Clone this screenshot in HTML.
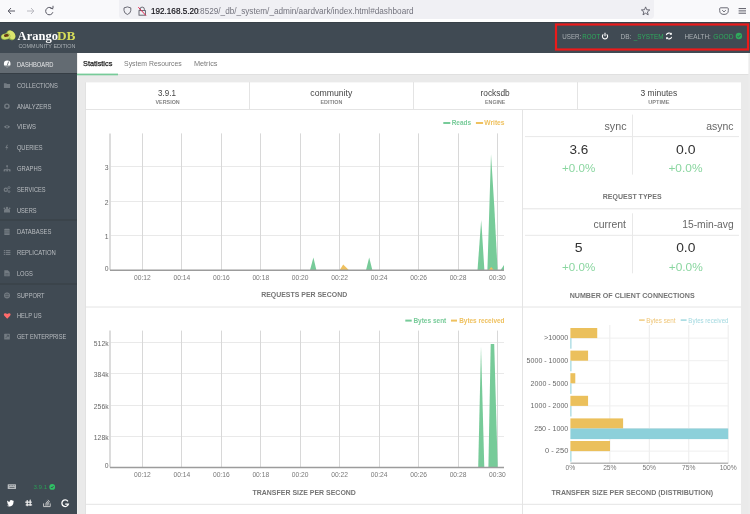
<!DOCTYPE html>
<html><head><meta charset="utf-8">
<style>
*{margin:0;padding:0}
html,body{width:750px;height:514px;overflow:hidden;background:#eaeaea;font-family:"Liberation Sans",sans-serif}
svg{position:absolute;left:0;top:0;will-change:transform}
</style></head><body>
<svg width="750" height="514" viewBox="0 0 750 514">
<rect x="0.00" y="0.00" width="750.00" height="22.00" fill="#f9f9fb" />
<rect x="119.00" y="-5.00" width="535.00" height="24.00" fill="#f0f0f4" rx="4"/>
<rect x="0.00" y="19.00" width="750.00" height="3.00" fill="#ffffff" />
<path d="M15 11 H8.2 M11 8 L8.2 11 L11 14" fill="none" stroke="#5b5b66" stroke-width="1" />
<path d="M27 11 H33.8 M31 8 L33.8 11 L31 14" fill="none" stroke="#b9b9c0" stroke-width="1" />
<path d="M52.6 9.3 A3.7 3.7 0 1 0 52.9 12.2" fill="none" stroke="#5b5b66" stroke-width="1" />
<path d="M50.4 8.4 L53 8.4 L53 5.8" fill="none" stroke="#5b5b66" stroke-width="1" />
<path d="M124 7.9 L127.4 6.9 L130.8 7.9 L130.8 10.4 Q130.8 13.2 127.4 14.5 Q124 13.2 124 10.4 Z" fill="none" stroke="#5b5b66" stroke-width="0.9" />
<path d="M140 10.6 V9.3 A2.2 2.2 0 0 1 144.4 9.3 V10.6" fill="none" stroke="#5b5b66" stroke-width="0.9" />
<rect x="139.00" y="10.60" width="6.40" height="4.60" fill="none" stroke="#5b5b66" stroke-width="0.9"/>
<line x1="138.30" y1="7.20" x2="146.00" y2="15.60" stroke="#e22850" stroke-width="1" />
<text x="151.00" y="14.00" font-size="8.2" fill="#15141a" font-weight="normal" font-family='"Liberation Sans",sans-serif' textLength="47.50" lengthAdjust="spacingAndGlyphs" stroke="#15141a" stroke-width="0.2">192.168.5.20</text>
<text x="197.80" y="14.00" font-size="8.2" fill="#73737d" font-weight="normal" font-family='"Liberation Sans",sans-serif' textLength="215.70" lengthAdjust="spacingAndGlyphs" >:8529/_db/_system/_admin/aardvark/index.html#dashboard</text>
<path d="M645.60 6.90 L646.72 9.76 L649.78 9.94 L647.41 11.89 L648.19 14.86 L645.60 13.20 L643.01 14.86 L643.79 11.89 L641.42 9.94 L644.48 9.76 Z" fill="none" stroke="#5b5b66" stroke-width="0.9" stroke-linejoin="round"/>
<path d="M720.6 7.8 H727.4 Q728.3 7.8 728.3 8.7 V10.6 Q728.3 14.4 724 14.4 Q719.7 14.4 719.7 10.6 V8.7 Q719.7 7.8 720.6 7.8 Z" fill="none" stroke="#5b5b66" stroke-width="0.9" />
<path d="M722.2 10.2 L724 11.9 L725.8 10.2" fill="none" stroke="#5b5b66" stroke-width="0.9" />
<line x1="738.60" y1="8.60" x2="746.00" y2="8.60" stroke="#5b5b66" stroke-width="1" />
<line x1="738.60" y1="10.90" x2="746.00" y2="10.90" stroke="#5b5b66" stroke-width="1" />
<line x1="738.60" y1="13.20" x2="746.00" y2="13.20" stroke="#5b5b66" stroke-width="1" />
<rect x="0.00" y="22.00" width="750.00" height="31.00" fill="#404a53" />
<line x1="0.00" y1="22.50" x2="750.00" y2="22.50" stroke="#384148" stroke-width="1" />
<ellipse cx="10.8" cy="35.2" rx="5.4" ry="4.0" transform="rotate(52 10.8 35.2)" fill="#93b04a"/>
<ellipse cx="11.4" cy="34.9" rx="4.8" ry="3.4" transform="rotate(52 11.4 34.9)" fill="#dbe46d"/>
<ellipse cx="5.6" cy="36.7" rx="4.8" ry="3.2" transform="rotate(-10 5.6 36.7)" fill="#86a743"/>
<ellipse cx="5.7" cy="36.4" rx="4.3" ry="2.7" transform="rotate(-10 5.7 36.4)" fill="#d0e068"/>
<ellipse cx="6.4" cy="35.4" rx="2.5" ry="1.45" transform="rotate(-6 6.4 35.4)" fill="#6b3a12"/>
<text x="17.60" y="40.00" font-size="13" fill="#ffffff" font-weight="bold" font-family='"Liberation Serif",serif' textLength="40.40" lengthAdjust="spacingAndGlyphs" >Arango</text>
<text x="57.00" y="40.00" font-size="13" fill="#d6dc5a" font-weight="bold" font-family='"Liberation Serif",serif' textLength="18.50" lengthAdjust="spacingAndGlyphs" >DB</text>
<text x="18.40" y="48.40" font-size="4.9" fill="#aab0b4" font-weight="normal" font-family='"Liberation Sans",sans-serif' textLength="57.10" lengthAdjust="spacingAndGlyphs" >COMMUNITY EDITION</text>
<rect x="556.00" y="24.50" width="192.00" height="25.00" fill="none" stroke="#ec1a1a" stroke-width="2.2"/>
<text x="562.30" y="38.60" font-size="6.6" fill="#aab0b4" font-weight="normal" font-family='"Liberation Sans",sans-serif' textLength="19.00" lengthAdjust="spacingAndGlyphs" >USER:</text>
<text x="582.30" y="38.60" font-size="6.6" fill="#2eab5c" font-weight="normal" font-family='"Liberation Sans",sans-serif' textLength="17.90" lengthAdjust="spacingAndGlyphs" >ROOT</text>
<path d="M603.3 34.3 A2.6 2.6 0 1 0 606.7 34.3" fill="none" stroke="#ffffff" stroke-width="1.1" />
<line x1="605.00" y1="32.80" x2="605.00" y2="36.20" stroke="#ffffff" stroke-width="1.1" />
<text x="620.50" y="38.60" font-size="6.6" fill="#aab0b4" font-weight="normal" font-family='"Liberation Sans",sans-serif' textLength="10.90" lengthAdjust="spacingAndGlyphs" >DB:</text>
<text x="633.70" y="38.60" font-size="6.6" fill="#2eab5c" font-weight="normal" font-family='"Liberation Sans",sans-serif' textLength="29.80" lengthAdjust="spacingAndGlyphs" >_SYSTEM</text>
<path d="M666.3 35.2 A2.8 2.8 0 0 1 671.3 34.2" fill="none" stroke="#ffffff" stroke-width="1.1" />
<path d="M671.6 36.8 A2.8 2.8 0 0 1 666.6 37.8" fill="none" stroke="#ffffff" stroke-width="1.1" />
<path d="M671.8 32.5 V34.8 H669.5 Z" fill="#ffffff" stroke="none" stroke-width="1" />
<path d="M666.1 39.5 V37.2 H668.4 Z" fill="#ffffff" stroke="none" stroke-width="1" />
<text x="684.50" y="38.60" font-size="6.6" fill="#aab0b4" font-weight="normal" font-family='"Liberation Sans",sans-serif' textLength="26.30" lengthAdjust="spacingAndGlyphs" >HEALTH:</text>
<text x="713.30" y="38.60" font-size="6.6" fill="#2eab5c" font-weight="normal" font-family='"Liberation Sans",sans-serif' textLength="20.20" lengthAdjust="spacingAndGlyphs" >GOOD</text>
<circle cx="738.9" cy="36" r="3.2" fill="#2eab5c"/>
<path d="M737.3 36.1 L738.5 37.2 L740.6 34.9" fill="none" stroke="#404a53" stroke-width="1" />
<rect x="0.00" y="53.00" width="77.00" height="461.00" fill="#404a53" />
<rect x="0.00" y="53.00" width="77.00" height="20.40" fill="#636b72" />
<text x="16.90" y="66.50" font-size="6.8" fill="#e6e7e8" font-weight="normal" font-family='"Liberation Sans",sans-serif' textLength="36.60" lengthAdjust="spacingAndGlyphs" >DASHBOARD</text>
<text x="16.90" y="88.00" font-size="6.8" fill="#b9bdc1" font-weight="normal" font-family='"Liberation Sans",sans-serif' textLength="40.90" lengthAdjust="spacingAndGlyphs" >COLLECTIONS</text>
<text x="16.90" y="108.80" font-size="6.8" fill="#b9bdc1" font-weight="normal" font-family='"Liberation Sans",sans-serif' textLength="34.60" lengthAdjust="spacingAndGlyphs" >ANALYZERS</text>
<text x="16.90" y="129.30" font-size="6.8" fill="#b9bdc1" font-weight="normal" font-family='"Liberation Sans",sans-serif' textLength="19.10" lengthAdjust="spacingAndGlyphs" >VIEWS</text>
<text x="16.90" y="150.10" font-size="6.8" fill="#b9bdc1" font-weight="normal" font-family='"Liberation Sans",sans-serif' textLength="25.60" lengthAdjust="spacingAndGlyphs" >QUERIES</text>
<text x="16.90" y="170.90" font-size="6.8" fill="#b9bdc1" font-weight="normal" font-family='"Liberation Sans",sans-serif' textLength="24.80" lengthAdjust="spacingAndGlyphs" >GRAPHS</text>
<text x="16.90" y="191.60" font-size="6.8" fill="#b9bdc1" font-weight="normal" font-family='"Liberation Sans",sans-serif' textLength="28.70" lengthAdjust="spacingAndGlyphs" >SERVICES</text>
<text x="16.90" y="212.60" font-size="6.8" fill="#b9bdc1" font-weight="normal" font-family='"Liberation Sans",sans-serif' textLength="19.70" lengthAdjust="spacingAndGlyphs" >USERS</text>
<text x="16.90" y="234.40" font-size="6.8" fill="#b9bdc1" font-weight="normal" font-family='"Liberation Sans",sans-serif' textLength="34.60" lengthAdjust="spacingAndGlyphs" >DATABASES</text>
<text x="16.90" y="255.10" font-size="6.8" fill="#b9bdc1" font-weight="normal" font-family='"Liberation Sans",sans-serif' textLength="38.90" lengthAdjust="spacingAndGlyphs" >REPLICATION</text>
<text x="16.90" y="275.80" font-size="6.8" fill="#b9bdc1" font-weight="normal" font-family='"Liberation Sans",sans-serif' textLength="16.00" lengthAdjust="spacingAndGlyphs" >LOGS</text>
<text x="16.90" y="297.90" font-size="6.8" fill="#b9bdc1" font-weight="normal" font-family='"Liberation Sans",sans-serif' textLength="27.50" lengthAdjust="spacingAndGlyphs" >SUPPORT</text>
<text x="16.90" y="318.40" font-size="6.8" fill="#b9bdc1" font-weight="normal" font-family='"Liberation Sans",sans-serif' textLength="24.80" lengthAdjust="spacingAndGlyphs" >HELP US</text>
<text x="16.90" y="339.10" font-size="6.8" fill="#b9bdc1" font-weight="normal" font-family='"Liberation Sans",sans-serif' textLength="49.30" lengthAdjust="spacingAndGlyphs" >GET ENTERPRISE</text>
<line x1="0.00" y1="73.50" x2="77.00" y2="73.50" stroke="#363e45" stroke-width="1" />
<line x1="0.00" y1="220.00" x2="77.00" y2="220.00" stroke="#363e45" stroke-width="1" />
<line x1="0.00" y1="284.00" x2="77.00" y2="284.00" stroke="#363e45" stroke-width="1" />
<rect x="77.00" y="53.00" width="1.00" height="461.00" fill="#f0f0ef" />
<circle cx="7.2" cy="63.9" r="3.3" fill="#ffffff"/>
<rect x="3.60" y="65.60" width="7.20" height="1.20" fill="#636b72" />
<path d="M7.2 65.6 L8.6 61.6" fill="none" stroke="#636b72" stroke-width="0.9" />
<path d="M3.9 83.2 H6.3 L7 84 H10.1 V88 H3.9 Z" fill="#737b82" stroke="none" stroke-width="1" />
<circle cx="6.9" cy="106.2" r="2.1" fill="none" stroke="#737b82" stroke-width="1.4"/>
<path d="M3.8 126.8 Q7 123.6 10.2 126.8 Q7 130 3.8 126.8 Z" fill="#737b82" stroke="none" stroke-width="1" />
<circle cx="7" cy="126.8" r="0.9" fill="#404a53"/>
<path d="M6.9 144.8 L5.3 148 H6.7 L5.9 150.6 L8.3 147 H6.9 L7.9 144.8 Z" fill="#737b82" stroke="none" stroke-width="1" />
<rect x="6.20" y="165.30" width="1.80" height="1.60" fill="#737b82" />
<rect x="4.00" y="169.20" width="6.20" height="0.80" fill="#737b82" />
<rect x="3.60" y="169.60" width="1.80" height="1.80" fill="#737b82" />
<rect x="6.20" y="169.60" width="1.80" height="1.80" fill="#737b82" />
<rect x="8.80" y="169.60" width="1.80" height="1.80" fill="#737b82" />
<rect x="6.80" y="166.50" width="0.60" height="3.00" fill="#737b82" />
<circle cx="5.8" cy="189.8" r="1.6" fill="none" stroke="#737b82" stroke-width="1.2"/>
<circle cx="9" cy="187.6" r="1" fill="none" stroke="#737b82" stroke-width="0.9"/>
<circle cx="9" cy="191.6" r="0.9" fill="none" stroke="#737b82" stroke-width="0.9"/>
<path d="M4 212.6 V210.4 Q4 209 5.5 209 H8.6 Q10 209 10 210.4 V212.6 Z" fill="#737b82" stroke="none" stroke-width="1" />
<circle cx="7" cy="208" r="1.2" fill="#737b82"/>
<circle cx="4.4" cy="208.3" r="0.9" fill="#737b82"/>
<circle cx="9.6" cy="208.3" r="0.9" fill="#737b82"/>
<rect x="4.30" y="228.80" width="5.30" height="6.20" fill="#737b82" rx="0.6"/>
<line x1="4.30" y1="230.90" x2="9.60" y2="230.90" stroke="#404a53" stroke-width="0.5" />
<line x1="4.30" y1="232.90" x2="9.60" y2="232.90" stroke="#404a53" stroke-width="0.5" />
<rect x="3.80" y="250.00" width="1.40" height="1.20" fill="#737b82" />
<rect x="5.80" y="250.00" width="4.60" height="1.20" fill="#737b82" />
<rect x="3.80" y="251.90" width="1.40" height="1.20" fill="#737b82" />
<rect x="5.80" y="251.90" width="4.60" height="1.20" fill="#737b82" />
<rect x="3.80" y="253.80" width="1.40" height="1.20" fill="#737b82" />
<rect x="5.80" y="253.80" width="4.60" height="1.20" fill="#737b82" />
<path d="M4.3 270.2 H7.8 L9.7 272.1 V276.3 H4.3 Z" fill="#737b82" stroke="none" stroke-width="1" />
<line x1="5.40" y1="273.60" x2="8.60" y2="273.60" stroke="#404a53" stroke-width="0.5" />
<line x1="5.40" y1="275.00" x2="8.60" y2="275.00" stroke="#404a53" stroke-width="0.5" />
<circle cx="7" cy="295.4" r="2.4" fill="none" stroke="#737b82" stroke-width="1.2"/>
<line x1="4.20" y1="295.40" x2="9.80" y2="295.40" stroke="#737b82" stroke-width="0.8" />
<line x1="7.00" y1="292.60" x2="7.00" y2="298.20" stroke="#737b82" stroke-width="0.8" />
<path d="M7.2 318.8 L4.3 315.8 Q3.3 314.6 4.2 313.6 Q5.5 312.5 7.2 314 Q8.9 312.5 10.2 313.6 Q11.1 314.6 10.1 315.8 Z" fill="#ff6b6b" stroke="none" stroke-width="1" />
<rect x="4.20" y="333.80" width="5.60" height="5.60" fill="#737b82" rx="0.5"/>
<path d="M5.8 337.8 L8.4 335.2 M6.8 335.2 H8.4 V336.8" fill="none" stroke="#404a53" stroke-width="0.7" />
<rect x="7.70" y="484.20" width="8.30" height="4.80" fill="#b7bbbe" rx="0.5"/>
<rect x="9.00" y="485.30" width="0.90" height="0.80" fill="#5a6268" />
<rect x="10.60" y="485.30" width="0.90" height="0.80" fill="#5a6268" />
<rect x="12.20" y="485.30" width="0.90" height="0.80" fill="#5a6268" />
<rect x="13.80" y="485.30" width="0.90" height="0.80" fill="#5a6268" />
<rect x="9.50" y="487.20" width="5.00" height="0.80" fill="#5a6268" />
<text x="33.40" y="489.30" font-size="6.2" fill="#2a9f56" font-weight="normal" font-family='"Liberation Sans",sans-serif' textLength="13.70" lengthAdjust="spacingAndGlyphs" >3.9.1</text>
<circle cx="52.2" cy="486.9" r="2.9" fill="#2fc064"/>
<path d="M50.9 487 L51.9 488 L53.6 486" fill="none" stroke="#404a53" stroke-width="0.9" />
<path d="M13.8 500.8 Q13.2 501.1 12.7 501.1 Q13.2 500.7 13.4 500.2 Q12.9 500.5 12.4 500.6 Q11.4 499.7 10.3 500.3 Q9.4 500.9 9.6 501.9 Q8.2 501.9 7.2 500.6 Q6.7 501.8 7.8 502.6 Q7.4 502.6 7.1 502.4 Q7.2 503.6 8.3 503.9 Q7.9 504 7.6 503.9 Q8 505 9.2 505 Q8.1 505.9 6.7 505.7 Q9.5 507.4 12.2 505.5 Q13.6 504 13.6 501.6 Z" fill="#ffffff" stroke="none" stroke-width="1" />
<rect x="26.60" y="500.00" width="1.20" height="6.20" fill="#f0f0f0" rx="0.5"/>
<rect x="29.60" y="499.60" width="1.20" height="6.20" fill="#f0f0f0" rx="0.5"/>
<rect x="25.20" y="501.60" width="6.60" height="1.20" fill="#f0f0f0" rx="0.5"/>
<rect x="25.60" y="504.20" width="6.60" height="1.20" fill="#f0f0f0" rx="0.5"/>
<path d="M43.6 503.4 V506.6 H50.2 V503.4" fill="none" stroke="#d8d8d8" stroke-width="0.9" />
<rect x="45.00" y="504.60" width="3.60" height="0.80" fill="#d8d8d8" />
<path d="M45.4 503.6 L48.6 504.1 M45.9 502.2 L48.8 503.4 M46.8 500.9 L49.2 502.8 M48 499.8 L49.8 502.2" fill="none" stroke="#d8d8d8" stroke-width="0.8" />
<path d="M67.9 501.3 A3.3 3.3 0 1 0 68.4 504.1 H65.2" fill="none" stroke="#ffffff" stroke-width="1.3" />
<rect x="78.00" y="53.00" width="672.00" height="21.00" fill="#ffffff" />
<line x1="78.00" y1="74.50" x2="750.00" y2="74.50" stroke="#e0e0e0" stroke-width="1" />
<rect x="77.00" y="73.60" width="41.00" height="1.70" fill="#77cb99" />
<text x="83.00" y="65.90" font-size="7.3" fill="#222222" font-weight="normal" font-family='"Liberation Sans",sans-serif' textLength="29.30" lengthAdjust="spacingAndGlyphs" stroke="#222222" stroke-width="0.25">Statistics</text>
<text x="124.10" y="65.90" font-size="7.3" fill="#7a7a7a" font-weight="normal" font-family='"Liberation Sans",sans-serif' textLength="57.70" lengthAdjust="spacingAndGlyphs" >System Resources</text>
<text x="193.90" y="65.90" font-size="7.3" fill="#7a7a7a" font-weight="normal" font-family='"Liberation Sans",sans-serif' textLength="23.60" lengthAdjust="spacingAndGlyphs" >Metrics</text>
<rect x="748.40" y="53.00" width="1.60" height="461.00" fill="#ececec" />
<rect x="86.00" y="82.40" width="655.00" height="432.00" fill="#ffffff" />
<line x1="85.50" y1="82.40" x2="85.50" y2="514.00" stroke="#e2e2e2" stroke-width="1" />
<line x1="86.00" y1="109.50" x2="741.00" y2="109.50" stroke="#e4e4e4" stroke-width="1" />
<line x1="249.50" y1="82.00" x2="249.50" y2="109.00" stroke="#e4e4e4" stroke-width="1" />
<line x1="413.50" y1="82.00" x2="413.50" y2="109.00" stroke="#e4e4e4" stroke-width="1" />
<line x1="577.50" y1="82.00" x2="577.50" y2="109.00" stroke="#e4e4e4" stroke-width="1" />
<text x="158.10" y="96.00" font-size="8.8" fill="#444444" font-weight="normal" font-family='"Liberation Sans",sans-serif' textLength="17.80" lengthAdjust="spacingAndGlyphs" >3.9.1</text>
<text x="155.50" y="104.10" font-size="5.9" fill="#858585" font-weight="bold" font-family='"Liberation Sans",sans-serif' textLength="24.20" lengthAdjust="spacingAndGlyphs" >VERSION</text>
<text x="310.30" y="96.00" font-size="8.8" fill="#444444" font-weight="normal" font-family='"Liberation Sans",sans-serif' textLength="42.00" lengthAdjust="spacingAndGlyphs" >community</text>
<text x="320.50" y="104.10" font-size="5.9" fill="#858585" font-weight="bold" font-family='"Liberation Sans",sans-serif' textLength="21.80" lengthAdjust="spacingAndGlyphs" >EDITION</text>
<text x="480.50" y="96.00" font-size="8.8" fill="#444444" font-weight="normal" font-family='"Liberation Sans",sans-serif' textLength="29.20" lengthAdjust="spacingAndGlyphs" >rocksdb</text>
<text x="485.10" y="104.10" font-size="5.9" fill="#858585" font-weight="bold" font-family='"Liberation Sans",sans-serif' textLength="20.20" lengthAdjust="spacingAndGlyphs" >ENGINE</text>
<text x="640.50" y="96.00" font-size="8.8" fill="#444444" font-weight="normal" font-family='"Liberation Sans",sans-serif' textLength="36.80" lengthAdjust="spacingAndGlyphs" >3 minutes</text>
<text x="648.30" y="104.10" font-size="5.9" fill="#858585" font-weight="bold" font-family='"Liberation Sans",sans-serif' textLength="21.20" lengthAdjust="spacingAndGlyphs" >UPTIME</text>
<line x1="522.50" y1="109.00" x2="522.50" y2="514.00" stroke="#e4e4e4" stroke-width="1" />
<line x1="522.00" y1="208.80" x2="741.00" y2="208.80" stroke="#e4e4e4" stroke-width="1" />
<line x1="86.00" y1="307.00" x2="741.00" y2="307.00" stroke="#e4e4e4" stroke-width="1" />
<line x1="86.00" y1="504.30" x2="741.00" y2="504.30" stroke="#e4e4e4" stroke-width="1" />
<line x1="525.00" y1="136.60" x2="739.00" y2="136.60" stroke="#e8e8e8" stroke-width="1" />
<line x1="632.50" y1="114.60" x2="632.50" y2="174.60" stroke="#e8e8e8" stroke-width="1" />
<text x="604.50" y="130.00" font-size="10.5" fill="#666666" font-weight="normal" font-family='"Liberation Sans",sans-serif' textLength="22.00" lengthAdjust="spacingAndGlyphs" >sync</text>
<text x="706.20" y="130.00" font-size="10.5" fill="#666666" font-weight="normal" font-family='"Liberation Sans",sans-serif' textLength="27.30" lengthAdjust="spacingAndGlyphs" >async</text>
<text x="569.50" y="153.50" font-size="12.8" fill="#333333" font-weight="normal" font-family='"Liberation Sans",sans-serif' textLength="18.80" lengthAdjust="spacingAndGlyphs" >3.6</text>
<text x="676.00" y="153.50" font-size="12.8" fill="#333333" font-weight="normal" font-family='"Liberation Sans",sans-serif' textLength="19.50" lengthAdjust="spacingAndGlyphs" >0.0</text>
<text x="562.10" y="172.20" font-size="11.3" fill="#8ad6a0" font-weight="normal" font-family='"Liberation Sans",sans-serif' textLength="33.20" lengthAdjust="spacingAndGlyphs" >+0.0%</text>
<text x="668.40" y="172.20" font-size="11.3" fill="#8ad6a0" font-weight="normal" font-family='"Liberation Sans",sans-serif' textLength="34.10" lengthAdjust="spacingAndGlyphs" >+0.0%</text>
<text x="602.80" y="198.70" font-size="7.2" fill="#747474" font-weight="bold" font-family='"Liberation Sans",sans-serif' textLength="58.80" lengthAdjust="spacingAndGlyphs" >REQUEST TYPES</text>
<line x1="525.00" y1="235.30" x2="739.00" y2="235.30" stroke="#e8e8e8" stroke-width="1" />
<line x1="632.50" y1="213.30" x2="632.50" y2="273.30" stroke="#e8e8e8" stroke-width="1" />
<text x="593.50" y="228.20" font-size="10.5" fill="#666666" font-weight="normal" font-family='"Liberation Sans",sans-serif' textLength="32.50" lengthAdjust="spacingAndGlyphs" >current</text>
<text x="682.20" y="228.20" font-size="10.5" fill="#666666" font-weight="normal" font-family='"Liberation Sans",sans-serif' textLength="51.50" lengthAdjust="spacingAndGlyphs" >15-min-avg</text>
<text x="574.70" y="251.70" font-size="12.8" fill="#333333" font-weight="normal" font-family='"Liberation Sans",sans-serif' textLength="7.80" lengthAdjust="spacingAndGlyphs" >5</text>
<text x="676.20" y="251.70" font-size="12.8" fill="#333333" font-weight="normal" font-family='"Liberation Sans",sans-serif' textLength="19.20" lengthAdjust="spacingAndGlyphs" >0.0</text>
<text x="562.10" y="270.90" font-size="11.3" fill="#8ad6a0" font-weight="normal" font-family='"Liberation Sans",sans-serif' textLength="33.20" lengthAdjust="spacingAndGlyphs" >+0.0%</text>
<text x="668.70" y="270.90" font-size="11.3" fill="#8ad6a0" font-weight="normal" font-family='"Liberation Sans",sans-serif' textLength="34.10" lengthAdjust="spacingAndGlyphs" >+0.0%</text>
<text x="569.70" y="297.60" font-size="7.2" fill="#747474" font-weight="bold" font-family='"Liberation Sans",sans-serif' textLength="125.00" lengthAdjust="spacingAndGlyphs" >NUMBER OF CLIENT CONNECTIONS</text>
<line x1="110.00" y1="166.50" x2="504.00" y2="166.50" stroke="#e9e9e9" stroke-width="1" />
<line x1="110.00" y1="201.50" x2="504.00" y2="201.50" stroke="#e9e9e9" stroke-width="1" />
<line x1="110.00" y1="235.50" x2="504.00" y2="235.50" stroke="#e9e9e9" stroke-width="1" />
<line x1="142.50" y1="133.40" x2="142.50" y2="270.30" stroke="#d8d8d8" stroke-width="1" />
<line x1="181.50" y1="133.40" x2="181.50" y2="270.30" stroke="#d8d8d8" stroke-width="1" />
<line x1="221.50" y1="133.40" x2="221.50" y2="270.30" stroke="#d8d8d8" stroke-width="1" />
<line x1="260.50" y1="133.40" x2="260.50" y2="270.30" stroke="#d8d8d8" stroke-width="1" />
<line x1="300.50" y1="133.40" x2="300.50" y2="270.30" stroke="#d8d8d8" stroke-width="1" />
<line x1="339.50" y1="133.40" x2="339.50" y2="270.30" stroke="#d8d8d8" stroke-width="1" />
<line x1="379.50" y1="133.40" x2="379.50" y2="270.30" stroke="#d8d8d8" stroke-width="1" />
<line x1="418.50" y1="133.40" x2="418.50" y2="270.30" stroke="#d8d8d8" stroke-width="1" />
<line x1="458.50" y1="133.40" x2="458.50" y2="270.30" stroke="#d8d8d8" stroke-width="1" />
<line x1="497.50" y1="133.40" x2="497.50" y2="270.30" stroke="#d8d8d8" stroke-width="1" />
<line x1="110.00" y1="133.40" x2="110.00" y2="270.30" stroke="#d9d9d9" stroke-width="1.8" />
<text x="108.60" y="170.10" font-size="6.8" fill="#666666" text-anchor="end" font-weight="normal" font-family='"Liberation Sans",sans-serif' >3</text>
<text x="108.60" y="205.10" font-size="6.8" fill="#666666" text-anchor="end" font-weight="normal" font-family='"Liberation Sans",sans-serif' >2</text>
<text x="108.60" y="239.10" font-size="6.8" fill="#666666" text-anchor="end" font-weight="normal" font-family='"Liberation Sans",sans-serif' >1</text>
<text x="108.60" y="270.60" font-size="6.8" fill="#666666" text-anchor="end" font-weight="normal" font-family='"Liberation Sans",sans-serif' >0</text>
<text x="142.40" y="279.70" font-size="6.7" fill="#777777" text-anchor="middle" font-weight="normal" font-family='"Liberation Sans",sans-serif' >00:12</text>
<text x="181.85" y="279.70" font-size="6.7" fill="#777777" text-anchor="middle" font-weight="normal" font-family='"Liberation Sans",sans-serif' >00:14</text>
<text x="221.30" y="279.70" font-size="6.7" fill="#777777" text-anchor="middle" font-weight="normal" font-family='"Liberation Sans",sans-serif' >00:16</text>
<text x="260.75" y="279.70" font-size="6.7" fill="#777777" text-anchor="middle" font-weight="normal" font-family='"Liberation Sans",sans-serif' >00:18</text>
<text x="300.20" y="279.70" font-size="6.7" fill="#777777" text-anchor="middle" font-weight="normal" font-family='"Liberation Sans",sans-serif' >00:20</text>
<text x="339.65" y="279.70" font-size="6.7" fill="#777777" text-anchor="middle" font-weight="normal" font-family='"Liberation Sans",sans-serif' >00:22</text>
<text x="379.10" y="279.70" font-size="6.7" fill="#777777" text-anchor="middle" font-weight="normal" font-family='"Liberation Sans",sans-serif' >00:24</text>
<text x="418.55" y="279.70" font-size="6.7" fill="#777777" text-anchor="middle" font-weight="normal" font-family='"Liberation Sans",sans-serif' >00:26</text>
<text x="458.00" y="279.70" font-size="6.7" fill="#777777" text-anchor="middle" font-weight="normal" font-family='"Liberation Sans",sans-serif' >00:28</text>
<text x="497.45" y="279.70" font-size="6.7" fill="#777777" text-anchor="middle" font-weight="normal" font-family='"Liberation Sans",sans-serif' >00:30</text>
<text x="261.20" y="297.40" font-size="7.2" fill="#747474" font-weight="bold" font-family='"Liberation Sans",sans-serif' textLength="86.00" lengthAdjust="spacingAndGlyphs" >REQUESTS PER SECOND</text>
<path d="M310.00 270.30 L313.40 257.40 L316.40 270.30 Z" fill="#77cb99" stroke="none" stroke-width="1" />
<path d="M366.00 270.30 L369.20 257.40 L372.40 270.30 Z" fill="#77cb99" stroke="none" stroke-width="1" />
<path d="M339.60 270.30 L343.20 264.40 L349.00 270.30 Z" fill="#efc15f" stroke="none" stroke-width="1" />
<path d="M477.50 270.30 L481.20 219.80 L484.40 270.30 Z" fill="#77cb99" stroke="none" stroke-width="1" />
<path d="M487.40 270.30 L491.00 154.10 L494.20 205.00 L497.60 270.30 Z" fill="#77cb99" stroke="none" stroke-width="1" />
<path d="M488.50 270.30 L491.20 267.00 L494.00 270.30 Z" fill="#efc15f" stroke="none" stroke-width="1" />
<path d="M500.50 270.30 L504.00 265.00 L504.00 270.30 Z" fill="#77cb99" stroke="none" stroke-width="1" />
<line x1="110.00" y1="270.30" x2="504.00" y2="270.30" stroke="#9c9c9c" stroke-width="1.5" />
<line x1="443.30" y1="123.00" x2="450.30" y2="123.00" stroke="#77cb99" stroke-width="2" />
<text x="451.70" y="125.40" font-size="6.3" fill="#77cb99" font-weight="bold" font-family='"Liberation Sans",sans-serif' textLength="19.40" lengthAdjust="spacingAndGlyphs" >Reads</text>
<line x1="475.90" y1="123.00" x2="483.10" y2="123.00" stroke="#efc15f" stroke-width="2" />
<text x="484.30" y="125.40" font-size="6.3" fill="#efc15f" font-weight="bold" font-family='"Liberation Sans",sans-serif' textLength="20.20" lengthAdjust="spacingAndGlyphs" >Writes</text>
<line x1="110.00" y1="342.50" x2="504.00" y2="342.50" stroke="#e9e9e9" stroke-width="1" />
<line x1="110.00" y1="373.50" x2="504.00" y2="373.50" stroke="#e9e9e9" stroke-width="1" />
<line x1="110.00" y1="405.50" x2="504.00" y2="405.50" stroke="#e9e9e9" stroke-width="1" />
<line x1="110.00" y1="436.50" x2="504.00" y2="436.50" stroke="#e9e9e9" stroke-width="1" />
<line x1="142.50" y1="330.60" x2="142.50" y2="467.60" stroke="#d8d8d8" stroke-width="1" />
<line x1="181.50" y1="330.60" x2="181.50" y2="467.60" stroke="#d8d8d8" stroke-width="1" />
<line x1="221.50" y1="330.60" x2="221.50" y2="467.60" stroke="#d8d8d8" stroke-width="1" />
<line x1="260.50" y1="330.60" x2="260.50" y2="467.60" stroke="#d8d8d8" stroke-width="1" />
<line x1="300.50" y1="330.60" x2="300.50" y2="467.60" stroke="#d8d8d8" stroke-width="1" />
<line x1="339.50" y1="330.60" x2="339.50" y2="467.60" stroke="#d8d8d8" stroke-width="1" />
<line x1="379.50" y1="330.60" x2="379.50" y2="467.60" stroke="#d8d8d8" stroke-width="1" />
<line x1="418.50" y1="330.60" x2="418.50" y2="467.60" stroke="#d8d8d8" stroke-width="1" />
<line x1="458.50" y1="330.60" x2="458.50" y2="467.60" stroke="#d8d8d8" stroke-width="1" />
<line x1="497.50" y1="330.60" x2="497.50" y2="467.60" stroke="#d8d8d8" stroke-width="1" />
<line x1="110.00" y1="330.60" x2="110.00" y2="467.60" stroke="#d9d9d9" stroke-width="1.8" />
<text x="108.60" y="346.10" font-size="6.8" fill="#666666" text-anchor="end" font-weight="normal" font-family='"Liberation Sans",sans-serif' >512k</text>
<text x="108.60" y="377.10" font-size="6.8" fill="#666666" text-anchor="end" font-weight="normal" font-family='"Liberation Sans",sans-serif' >384k</text>
<text x="108.60" y="409.10" font-size="6.8" fill="#666666" text-anchor="end" font-weight="normal" font-family='"Liberation Sans",sans-serif' >256k</text>
<text x="108.60" y="440.10" font-size="6.8" fill="#666666" text-anchor="end" font-weight="normal" font-family='"Liberation Sans",sans-serif' >128k</text>
<text x="108.60" y="467.90" font-size="6.8" fill="#666666" text-anchor="end" font-weight="normal" font-family='"Liberation Sans",sans-serif' >0</text>
<text x="142.40" y="477.00" font-size="6.7" fill="#777777" text-anchor="middle" font-weight="normal" font-family='"Liberation Sans",sans-serif' >00:12</text>
<text x="181.85" y="477.00" font-size="6.7" fill="#777777" text-anchor="middle" font-weight="normal" font-family='"Liberation Sans",sans-serif' >00:14</text>
<text x="221.30" y="477.00" font-size="6.7" fill="#777777" text-anchor="middle" font-weight="normal" font-family='"Liberation Sans",sans-serif' >00:16</text>
<text x="260.75" y="477.00" font-size="6.7" fill="#777777" text-anchor="middle" font-weight="normal" font-family='"Liberation Sans",sans-serif' >00:18</text>
<text x="300.20" y="477.00" font-size="6.7" fill="#777777" text-anchor="middle" font-weight="normal" font-family='"Liberation Sans",sans-serif' >00:20</text>
<text x="339.65" y="477.00" font-size="6.7" fill="#777777" text-anchor="middle" font-weight="normal" font-family='"Liberation Sans",sans-serif' >00:22</text>
<text x="379.10" y="477.00" font-size="6.7" fill="#777777" text-anchor="middle" font-weight="normal" font-family='"Liberation Sans",sans-serif' >00:24</text>
<text x="418.55" y="477.00" font-size="6.7" fill="#777777" text-anchor="middle" font-weight="normal" font-family='"Liberation Sans",sans-serif' >00:26</text>
<text x="458.00" y="477.00" font-size="6.7" fill="#777777" text-anchor="middle" font-weight="normal" font-family='"Liberation Sans",sans-serif' >00:28</text>
<text x="497.45" y="477.00" font-size="6.7" fill="#777777" text-anchor="middle" font-weight="normal" font-family='"Liberation Sans",sans-serif' >00:30</text>
<text x="252.50" y="494.70" font-size="7.2" fill="#747474" font-weight="bold" font-family='"Liberation Sans",sans-serif' textLength="103.40" lengthAdjust="spacingAndGlyphs" >TRANSFER SIZE PER SECOND</text>
<path d="M478.20 467.60 L481.00 346.00 L484.30 467.60 Z" fill="#77cb99" stroke="none" stroke-width="1" />
<path d="M488.40 467.60 L490.70 344.00 L494.20 344.00 L497.70 467.60 Z" fill="#77cb99" stroke="none" stroke-width="1" />
<line x1="110.00" y1="467.60" x2="504.00" y2="467.60" stroke="#9c9c9c" stroke-width="1.5" />
<line x1="405.30" y1="320.60" x2="411.70" y2="320.60" stroke="#77cb99" stroke-width="2" />
<text x="413.40" y="322.90" font-size="6.3" fill="#77cb99" font-weight="bold" font-family='"Liberation Sans",sans-serif' textLength="32.90" lengthAdjust="spacingAndGlyphs" >Bytes sent</text>
<line x1="451.00" y1="320.60" x2="457.00" y2="320.60" stroke="#efc15f" stroke-width="2" />
<text x="459.20" y="322.90" font-size="6.3" fill="#efc15f" font-weight="bold" font-family='"Liberation Sans",sans-serif' textLength="45.30" lengthAdjust="spacingAndGlyphs" >Bytes received</text>
<line x1="609.85" y1="325.00" x2="609.85" y2="463.00" stroke="#ececec" stroke-width="1" />
<line x1="649.30" y1="325.00" x2="649.30" y2="463.00" stroke="#ececec" stroke-width="1" />
<line x1="688.75" y1="325.00" x2="688.75" y2="463.00" stroke="#ececec" stroke-width="1" />
<line x1="728.20" y1="325.00" x2="728.20" y2="463.00" stroke="#ececec" stroke-width="1" />
<line x1="570.40" y1="338.10" x2="728.20" y2="338.10" stroke="#efefef" stroke-width="1" />
<rect x="570.40" y="328.00" width="26.83" height="10.10" fill="#ebc05c" />
<rect x="570.40" y="338.10" width="1.00" height="10.60" fill="#8cd0da" />
<text x="544.10" y="340.40" font-size="6.8" fill="#6a6a6a" font-weight="normal" font-family='"Liberation Sans",sans-serif' textLength="24.20" lengthAdjust="spacingAndGlyphs" >&gt;10000</text>
<line x1="570.40" y1="360.70" x2="728.20" y2="360.70" stroke="#efefef" stroke-width="1" />
<rect x="570.40" y="350.60" width="17.67" height="10.10" fill="#ebc05c" />
<rect x="570.40" y="360.70" width="1.00" height="10.60" fill="#8cd0da" />
<text x="526.60" y="363.00" font-size="6.8" fill="#6a6a6a" font-weight="normal" font-family='"Liberation Sans",sans-serif' textLength="41.70" lengthAdjust="spacingAndGlyphs" >5000 - 10000</text>
<line x1="570.40" y1="383.30" x2="728.20" y2="383.30" stroke="#efefef" stroke-width="1" />
<rect x="570.40" y="373.20" width="4.89" height="10.10" fill="#ebc05c" />
<rect x="570.40" y="383.30" width="1.00" height="10.60" fill="#8cd0da" />
<text x="530.60" y="385.60" font-size="6.8" fill="#6a6a6a" font-weight="normal" font-family='"Liberation Sans",sans-serif' textLength="37.70" lengthAdjust="spacingAndGlyphs" >2000 - 5000</text>
<line x1="570.40" y1="405.90" x2="728.20" y2="405.90" stroke="#efefef" stroke-width="1" />
<rect x="570.40" y="395.80" width="17.67" height="10.10" fill="#ebc05c" />
<rect x="570.40" y="405.90" width="1.00" height="10.60" fill="#8cd0da" />
<text x="530.60" y="408.20" font-size="6.8" fill="#6a6a6a" font-weight="normal" font-family='"Liberation Sans",sans-serif' textLength="37.70" lengthAdjust="spacingAndGlyphs" >1000 - 2000</text>
<line x1="570.40" y1="428.50" x2="728.20" y2="428.50" stroke="#efefef" stroke-width="1" />
<rect x="570.40" y="418.40" width="52.71" height="10.10" fill="#ebc05c" />
<rect x="570.40" y="428.50" width="157.80" height="10.60" fill="#8cd0da" />
<text x="534.20" y="430.80" font-size="6.8" fill="#6a6a6a" font-weight="normal" font-family='"Liberation Sans",sans-serif' textLength="34.10" lengthAdjust="spacingAndGlyphs" >250 - 1000</text>
<line x1="570.40" y1="451.10" x2="728.20" y2="451.10" stroke="#efefef" stroke-width="1" />
<rect x="570.40" y="441.00" width="39.61" height="10.10" fill="#ebc05c" />
<rect x="570.40" y="451.10" width="1.00" height="10.60" fill="#8cd0da" />
<text x="545.00" y="453.40" font-size="6.8" fill="#6a6a6a" font-weight="normal" font-family='"Liberation Sans",sans-serif' textLength="23.30" lengthAdjust="spacingAndGlyphs" >0 - 250</text>
<line x1="570.40" y1="463.30" x2="728.20" y2="463.30" stroke="#b8b8b8" stroke-width="1.4" />
<text x="570.40" y="470.40" font-size="6.7" fill="#777777" text-anchor="middle" font-weight="normal" font-family='"Liberation Sans",sans-serif' >0%</text>
<text x="609.85" y="470.40" font-size="6.7" fill="#777777" text-anchor="middle" font-weight="normal" font-family='"Liberation Sans",sans-serif' >25%</text>
<text x="649.30" y="470.40" font-size="6.7" fill="#777777" text-anchor="middle" font-weight="normal" font-family='"Liberation Sans",sans-serif' >50%</text>
<text x="688.75" y="470.40" font-size="6.7" fill="#777777" text-anchor="middle" font-weight="normal" font-family='"Liberation Sans",sans-serif' >75%</text>
<text x="728.20" y="470.40" font-size="6.7" fill="#777777" text-anchor="middle" font-weight="normal" font-family='"Liberation Sans",sans-serif' >100%</text>
<line x1="639.10" y1="320.10" x2="644.70" y2="320.10" stroke="#f0cc80" stroke-width="1.5" />
<text x="646.30" y="323.20" font-size="6.5" fill="#efc576" font-weight="normal" font-family='"Liberation Sans",sans-serif' textLength="29.30" lengthAdjust="spacingAndGlyphs" >Bytes sent</text>
<line x1="680.70" y1="320.10" x2="686.60" y2="320.10" stroke="#9fd8df" stroke-width="1.5" />
<text x="688.30" y="323.20" font-size="6.5" fill="#a3d9e0" font-weight="normal" font-family='"Liberation Sans",sans-serif' textLength="40.20" lengthAdjust="spacingAndGlyphs" >Bytes received</text>
<text x="551.50" y="495.00" font-size="7.2" fill="#747474" font-weight="bold" font-family='"Liberation Sans",sans-serif' textLength="161.70" lengthAdjust="spacingAndGlyphs" >TRANSFER SIZE PER SECOND (DISTRIBUTION)</text>
</svg>
</body></html>
